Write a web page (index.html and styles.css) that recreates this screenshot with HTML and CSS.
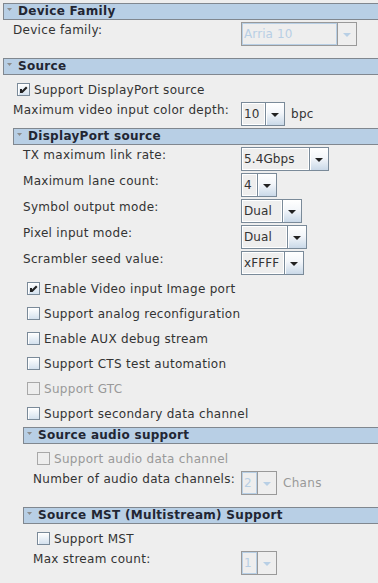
FILE: index.html
```html
<!DOCTYPE html>
<html lang="en">
<head>
    <meta charset="UTF-8">
    <title>DisplayPort Parameters</title>
    <link rel="stylesheet" href="styles.css">
</head>
<body>

    <div class="panel">
        <div class="group">
            <div class="group-title"><svg class="caret" width="5" height="3" viewBox="0 0 5 3"><path d="M0 0H5L2.5 3Z"/></svg>Device Family</div>
            <div class="group-body">
                <div class="row">
                    <span class="label">Device family:</span>
                    <div class="combo combo-family disabled"><span class="value">Arria 10</span><span class="arrow"></span></div>
                </div>
            </div>
        </div>

        <div class="group">
            <div class="group-title"><svg class="caret" width="5" height="3" viewBox="0 0 5 3"><path d="M0 0H5L2.5 3Z"/></svg>Source</div>
            <div class="group-body">
                <div class="check"><span class="box checked"></span>Support DisplayPort source</div>
                <div class="row">
                    <span class="label">Maximum video input color depth:</span>
                    <div class="combo combo-depth"><span class="value">10</span><span class="arrow"></span></div>
                    <span class="unit">bpc</span>
                </div>

                <div class="group">
                    <div class="group-title"><svg class="caret" width="5" height="3" viewBox="0 0 5 3"><path d="M0 0H5L2.5 3Z"/></svg>DisplayPort source</div>
                    <div class="group-body">
                        <div class="row">
                            <span class="label">TX maximum link rate:</span>
                            <div class="combo combo-rate"><span class="value">5.4Gbps</span><span class="arrow"></span></div>
                        </div>
                        <div class="row">
                            <span class="label">Maximum lane count:</span>
                            <div class="combo combo-small"><span class="value">4</span><span class="arrow"></span></div>
                        </div>
                        <div class="row">
                            <span class="label">Symbol output mode:</span>
                            <div class="combo combo-symbol"><span class="value">Dual</span><span class="arrow"></span></div>
                        </div>
                        <div class="row">
                            <span class="label">Pixel input mode:</span>
                            <div class="combo combo-pixel"><span class="value">Dual</span><span class="arrow"></span></div>
                        </div>
                        <div class="row">
                            <span class="label">Scrambler seed value:</span>
                            <div class="combo combo-seed"><span class="value">xFFFF</span><span class="arrow"></span></div>
                        </div>

                        <div class="check"><span class="box checked"></span>Enable Video input Image port</div>
                        <div class="check"><span class="box"></span>Support analog reconfiguration</div>
                        <div class="check"><span class="box"></span>Enable AUX debug stream</div>
                        <div class="check"><span class="box"></span>Support CTS test automation</div>
                        <div class="check disabled"><span class="box"></span>Support GTC</div>
                        <div class="check"><span class="box"></span>Support secondary data channel</div>

                        <div class="group">
                            <div class="group-title"><svg class="caret" width="5" height="3" viewBox="0 0 5 3"><path d="M0 0H5L2.5 3Z"/></svg>Source audio support</div>
                            <div class="group-body">
                                <div class="check disabled"><span class="box"></span>Support audio data channel</div>
                                <div class="row">
                                    <span class="label">Number of audio data channels:</span>
                                    <div class="combo combo-small disabled"><span class="value">2</span><span class="arrow"></span></div>
                                    <span class="unit disabled">Chans</span>
                                </div>
                            </div>
                        </div>

                        <div class="group">
                            <div class="group-title"><svg class="caret" width="5" height="3" viewBox="0 0 5 3"><path d="M0 0H5L2.5 3Z"/></svg>Source MST (Multistream) Support</div>
                            <div class="group-body">
                                <div class="check"><span class="box"></span>Support MST</div>
                                <div class="row">
                                    <span class="label">Max stream count:</span>
                                    <div class="combo combo-small disabled"><span class="value">1</span><span class="arrow"></span></div>
                                </div>
                            </div>
                        </div>
                    </div>
                </div>
            </div>
        </div>
    </div>

</body>
</html>
```

FILE: styles.css
```css
html, body {
    margin: 0;
    overflow: hidden;
}

body {
    background-color: #eeeeee;
    font-family: "DejaVu Sans", Verdana, sans-serif;
    font-size: 12px;
    letter-spacing: 0.3px;
    color: #333333;
}

.panel {
    padding: 3px 0 0 3px;
}

/* collapsible section headers */
.group-title {
    display: flex;
    align-items: center;
    height: 17px;
    box-sizing: border-box;
    padding-left: 3px;
    border: 1px solid #80878f;
    border-right: none;
    background-color: #b8cfe5;
    font-weight: bold;
    line-height: 15px;
    color: #222633;
    white-space: nowrap;
}

.caret {
    fill: #8c8c8c;
    margin-right: 6px;
    margin-bottom: 4px;
}

.group-body {
    padding-left: 10px;
}

.group + .group {
    margin-top: 12px;
}

.group-body > .group {
    margin-top: 2px;
}

.check + .group {
    margin-top: 1px;
}

.group-body > .group + .group {
    margin-top: 12px;
}

/* label + combo rows */
.row {
    display: flex;
    align-items: center;
    height: 24px;
    margin-top: 2px;
}

.check + .row {
    margin-top: 0;
}

.label {
    align-self: flex-start;
    width: 228px;
    margin-top: 1px;
    line-height: 15px;
    white-space: nowrap;
}

.group .group .label {
    width: 218px;
}

.group .group .group .label {
    width: 208px;
}

.unit {
    margin-left: 6px;
}

.unit.disabled {
    color: #999999;
}

/* combo boxes */
.combo {
    display: flex;
    height: 24px;
    box-sizing: border-box;
    border: 1px solid #7a8a99;
    background-color: #eeeeee;
}

.combo .value {
    flex: 1;
    padding-left: 2px;
    border-right: 1px solid #7a8a99;
    box-shadow: inset 0 0 0 1px #ffffff;
    line-height: 22px;
    letter-spacing: 0.1px;
    white-space: nowrap;
    overflow: hidden;
}

.combo .arrow {
    display: flex;
    align-items: center;
    justify-content: center;
    width: 18px;
    background: linear-gradient(#ffffff 0%, #f3f6fa 45%, #cad9e8 100%);
    box-shadow: inset 1px 1px 0 #ffffff;
}

.combo .arrow::after {
    content: "";
    border-left: 4px solid transparent;
    border-right: 4px solid transparent;
    border-top: 4px solid #222222;
    margin-top: 1px;
}

.combo.disabled {
    border-color: #999999;
}

.combo.disabled .value {
    color: #b8cfe5;
    border-right-color: #999999;
    box-shadow: inset 0 0 0 1px #b8cfe5;
}

.combo.disabled .arrow {
    background: #eeeeee;
    box-shadow: none;
}

.combo.disabled .arrow::after {
    border-top-color: #b8cfe5;
}

.combo-family { width: 116px; }
.combo-depth { width: 44px; }
.combo-rate { width: 88px; }
.combo-small { width: 36px; }
.combo-symbol { width: 61px; }
.combo-pixel { width: 66px; }
.combo-seed { width: 63px; }

/* check boxes */
.check {
    display: flex;
    align-items: center;
    height: 25px;
    padding-left: 4px;
    white-space: nowrap;
}

.row + .check {
    margin-top: 1px;
}

.group-body > .check:first-child {
    margin-top: 2px;
}

.box {
    position: relative;
    width: 13px;
    height: 13px;
    box-sizing: border-box;
    margin-right: 4px;
    border: 1px solid #7a8a99;
    background: linear-gradient(#ffffff, #d4e1ee);
    box-shadow: inset 1px 1px 0 #ffffff;
}

.box.checked::after {
    content: "";
    position: absolute;
    left: 2px;
    top: 2px;
    width: 8px;
    height: 8px;
    background: url("data:image/svg+xml;utf8,<svg xmlns='http://www.w3.org/2000/svg' width='8' height='8' viewBox='0 0 8 8'><path d='M0 3H2V4.5L6 0.5L7.5 2L2.5 7H0Z' fill='%23222222'/></svg>") no-repeat;
}

.check.disabled {
    color: #999999;
}

.check.disabled .box {
    border-color: #a8a8a8;
    background: #eeeeee;
    box-shadow: none;
}
```
